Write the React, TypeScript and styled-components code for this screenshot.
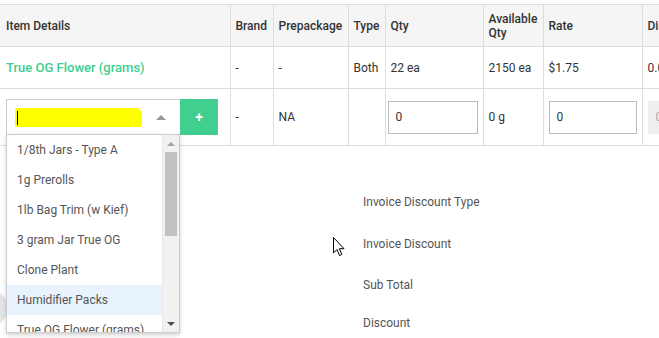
import React from "react";
import styled, { createGlobalStyle } from "styled-components";

const Global = createGlobalStyle`
  html, body { margin: 0; padding: 0; background: #fff; }
  body { font-family: Roboto, "Noto Sans", Arial, sans-serif; font-size: 12px; color: #333; overflow: hidden; }
`;

const Page = styled.div`
  position: relative;
  width: 659px;
  height: 338px;
  overflow: hidden;
  padding-top: 4px;
  box-sizing: border-box;
`;

const Table = styled.table`
  border-collapse: collapse;
  table-layout: fixed;
  width: 760px;
  font-size: 12px;
`;

const Th = styled.th<{ w: number; first?: boolean }>`
  width: ${(p) => p.w}px;
  height: 42px;
  background: #f5f5f5;
  border: 1px solid #dddddd;
  border-left: ${(p) => (p.first ? "none" : "1px solid #dddddd")};
  text-align: left;
  padding: 0 5px 0 ${(p) => (p.first ? 6 : 5)}px;
  font-weight: 500;
  color: #333;
  line-height: 14px;
  vertical-align: middle;
  box-sizing: border-box;
`;

const Td = styled.td<{ first?: boolean; tall?: boolean }>`
  height: ${(p) => (p.tall ? 57 : 42)}px;
  border: 1px solid #dddddd;
  border-left: ${(p) => (p.first ? "none" : "1px solid #dddddd")};
  padding: 0 5px 0 ${(p) => (p.first ? 6 : 5)}px;
  vertical-align: middle;
  color: #333;
  box-sizing: border-box;
  white-space: nowrap;
  position: relative;
`;

const ItemName = styled.span`
  color: #3ecf8e;
  font-weight: 500;
  font-size: 13px;
`;

const SelectGroup = styled.div`
  position: relative;
  display: flex;
  width: 212px;
  height: 36px;
`;

const SelectBox = styled.div`
  flex: 1;
  display: flex;
  align-items: center;
  border: 1px solid #cccccc;
  border-right: none;
  padding: 0 10px 0 8px;
  box-sizing: border-box;
  background: #fff;
`;

const Redacted = styled.div`
  position: relative;
  width: 127px;
  height: 19px;
  background: #ffff00;
  border-radius: 2px 6px 3px 2px;
`;

const Caret = styled.div`
  position: absolute;
  left: 2px;
  top: 3px;
  width: 1px;
  height: 14px;
  background: #000;
`;

const UpArrow = styled.div`
  margin-left: auto;
  width: 0;
  height: 0;
  border-left: 5px solid transparent;
  border-right: 5px solid transparent;
  border-bottom: 5px solid #999;
  margin-right: 4px;
`;

const AddButton = styled.div`
  width: 38px;
  height: 36px;
  background: #40cf8f;
  color: #fff;
  font-weight: 700;
  font-size: 14px;
  display: flex;
  align-items: center;
  justify-content: center;
`;

const Dropdown = styled.div`
  position: absolute;
  left: 0;
  top: 35px;
  width: 174px;
  height: 199px;
  border: 1px solid #cccccc;
  box-sizing: border-box;
  background: #fff;
  box-shadow: 0 2px 4px rgba(0, 0, 0, 0.18);
  display: flex;
  overflow: hidden;
  z-index: 5;
`;

const List = styled.div`
  flex: 1;
  display: flex;
  flex-direction: column;
`;

const Option = styled.div<{ active?: boolean }>`
  flex: 0 0 30px;
  height: 30px;
  display: flex;
  align-items: center;
  padding-left: 10px;
  color: #555;
  font-size: 12px;
  background: ${(p) => (p.active ? "#e8f3fd" : "#fff")};
`;

const Scrollbar = styled.div`
  width: 16px;
  background: #f1f1f1;
  display: flex;
  flex-direction: column;
  align-items: center;
  border-left: 1px solid #e8e8e8;
`;

const ScrollBtn = styled.div<{ down?: boolean }>`
  height: 17px;
  width: 100%;
  display: flex;
  align-items: center;
  justify-content: center;
  margin-top: ${(p) => (p.down ? "auto" : "0")};
  &::after {
    content: "";
    width: 0;
    height: 0;
    border-left: 4px solid transparent;
    border-right: 4px solid transparent;
    ${(p) => (p.down ? "border-top: 4px solid #505050;" : "border-bottom: 4px solid #a3a3a3;")}
  }
`;

const Thumb = styled.div`
  width: 12px;
  height: 84px;
  background: #c1c1c1;
`;

const Input = styled.div<{ disabled?: boolean; w: number; ml: number }>`
  width: ${(p) => p.w}px;
  height: 33px;
  margin-left: ${(p) => p.ml}px;
  border: 1px solid ${(p) => (p.disabled ? "#eeeeee" : "#bbbbbb")};
  background: ${(p) => (p.disabled ? "#eeeeee" : "#fff")};
  color: ${(p) => (p.disabled ? "#aaa" : "#333")};
  box-sizing: border-box;
  display: flex;
  align-items: center;
  padding-left: 7px;
`;

const Summary = styled.div`
  display: flex;
  flex-direction: column;
  margin: 49px 0 0 363px;
`;

const SummaryLabel = styled.div<{ h: number }>`
  height: ${(p) => p.h}px;
  line-height: 14px;
  color: #555;
  font-size: 12px;
`;

const GrayBlob = styled.div`
  position: absolute;
  left: -28px;
  top: 290px;
  width: 36px;
  height: 36px;
  border-radius: 50%;
  background: #e4e4e4;
`;

const Cursor = styled.svg`
  position: absolute;
  left: 333px;
  top: 237px;
`;

const options = [
  "1/8th Jars - Type A",
  "1g Prerolls",
  "1lb Bag Trim (w Kief)",
  "3 gram Jar True OG",
  "Clone Plant",
  "Humidifier Packs",
  "True OG Flower (grams)",
];

const cols: [string, number][] = [
  ["Item Details", 230],
  ["Brand", 43],
  ["Prepackage", 75],
  ["Type", 37],
  ["Qty", 98],
  ["Available Qty", 60],
  ["Rate", 99],
  ["Discount", 118],
];

export default function App() {
  return (
    <>
      <Global />
      <Page>
        <GrayBlob />
        <Table>
          <thead>
            <tr>
              {cols.map(([t, w], i) => (
                <Th key={t} w={w} first={i === 0}>
                  {t === "Available Qty" ? (
                    <>
                      Available
                      <br />
                      Qty
                    </>
                  ) : (
                    t
                  )}
                </Th>
              ))}
            </tr>
          </thead>
          <tbody>
            <tr>
              <Td first>
                <ItemName>True OG Flower (grams)</ItemName>
              </Td>
              <Td>-</Td>
              <Td>-</Td>
              <Td>Both</Td>
              <Td>22 ea</Td>
              <Td>2150 ea</Td>
              <Td>$1.75</Td>
              <Td>0.00</Td>
            </tr>
            <tr>
              <Td first tall>
                <SelectGroup>
                  <SelectBox>
                    <Redacted>
                      <Caret />
                    </Redacted>
                    <UpArrow />
                  </SelectBox>
                  <AddButton>+</AddButton>
                  <Dropdown>
                    <List>
                      {options.map((o, i) => (
                        <Option key={o} active={i === 5}>
                          {o}
                        </Option>
                      ))}
                    </List>
                    <Scrollbar>
                      <ScrollBtn />
                      <Thumb />
                      <ScrollBtn down />
                    </Scrollbar>
                  </Dropdown>
                </SelectGroup>
              </Td>
              <Td tall>-</Td>
              <Td tall>NA</Td>
              <Td tall></Td>
              <Td tall>
                <Input w={90} ml={-3}>0</Input>
              </Td>
              <Td tall>0 g</Td>
              <Td tall>
                <Input w={88} ml={0}>0</Input>
              </Td>
              <Td tall>
                <Input w={90} ml={0} disabled>
                  0
                </Input>
              </Td>
            </tr>
          </tbody>
        </Table>
        <Summary>
          <SummaryLabel h={42}>Invoice Discount Type</SummaryLabel>
          <SummaryLabel h={41}>Invoice Discount</SummaryLabel>
          <SummaryLabel h={38}>Sub Total</SummaryLabel>
          <SummaryLabel h={20}>Discount</SummaryLabel>
        </Summary>
        <Cursor width="13" height="20" viewBox="0 0 13 20">
          <path
            d="M0.5 0.5 L0.5 16 L4 12.5 L6.5 18.5 L8.8 17.5 L6.3 11.7 L11 11.7 Z"
            fill="#fff"
            stroke="#000"
            strokeWidth="1"
            strokeLinejoin="miter"
          />
        </Cursor>
      </Page>
    </>
  );
}
